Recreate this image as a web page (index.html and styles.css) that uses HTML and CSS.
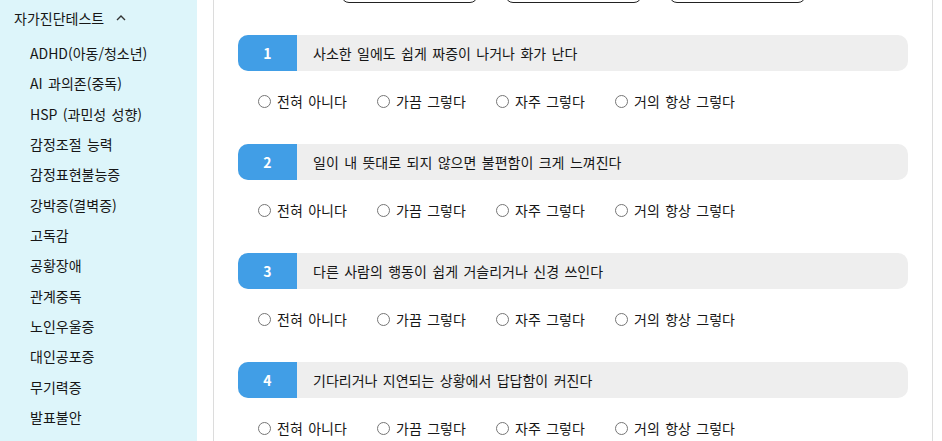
FILE: index.html
```html
<!DOCTYPE html>
<html lang="ko">
<head>
<meta charset="utf-8">
<title>자가진단테스트</title>
<link rel="stylesheet" href="styles.css">
</head>
<body>
<div class="page">
  <aside class="sidebar">
    <div class="side-head">자가진단테스트
      <svg class="caret" width="10" height="6" viewBox="0 0 10 6"><path d="M1 5 L5 1 L9 5" fill="none" stroke="#333" stroke-width="1.4"/></svg>
    </div>
    <ul class="side-list">
      <li>ADHD(아동/청소년)</li>
      <li>AI 과의존(중독)</li>
      <li>HSP (과민성 성향)</li>
      <li>감정조절 능력</li>
      <li>감정표현불능증</li>
      <li>강박증(결벽증)</li>
      <li>고독감</li>
      <li>공황장애</li>
      <li>관계중독</li>
      <li>노인우울증</li>
      <li>대인공포증</li>
      <li>무기력증</li>
      <li>발표불안</li>
    </ul>
  </aside>
  <main class="main">
    <div class="tabs">
      <span class="tab"></span>
      <span class="tab"></span>
      <span class="tab"></span>
    </div>

    <section class="q">
      <div class="q-head"><span class="q-num">1</span><span class="q-text">사소한 일에도 쉽게 짜증이 나거나 화가 난다</span></div>
      <div class="opts">
        <label class="opt"><span class="radio"></span>전혀 아니다</label>
        <label class="opt"><span class="radio"></span>가끔 그렇다</label>
        <label class="opt"><span class="radio"></span>자주 그렇다</label>
        <label class="opt"><span class="radio"></span>거의 항상 그렇다</label>
      </div>
    </section>

    <section class="q">
      <div class="q-head"><span class="q-num">2</span><span class="q-text">일이 내 뜻대로 되지 않으면 불편함이 크게 느껴진다</span></div>
      <div class="opts">
        <label class="opt"><span class="radio"></span>전혀 아니다</label>
        <label class="opt"><span class="radio"></span>가끔 그렇다</label>
        <label class="opt"><span class="radio"></span>자주 그렇다</label>
        <label class="opt"><span class="radio"></span>거의 항상 그렇다</label>
      </div>
    </section>

    <section class="q">
      <div class="q-head"><span class="q-num">3</span><span class="q-text">다른 사람의 행동이 쉽게 거슬리거나 신경 쓰인다</span></div>
      <div class="opts">
        <label class="opt"><span class="radio"></span>전혀 아니다</label>
        <label class="opt"><span class="radio"></span>가끔 그렇다</label>
        <label class="opt"><span class="radio"></span>자주 그렇다</label>
        <label class="opt"><span class="radio"></span>거의 항상 그렇다</label>
      </div>
    </section>

    <section class="q">
      <div class="q-head"><span class="q-num">4</span><span class="q-text">기다리거나 지연되는 상황에서 답답함이 커진다</span></div>
      <div class="opts">
        <label class="opt"><span class="radio"></span>전혀 아니다</label>
        <label class="opt"><span class="radio"></span>가끔 그렇다</label>
        <label class="opt"><span class="radio"></span>자주 그렇다</label>
        <label class="opt"><span class="radio"></span>거의 항상 그렇다</label>
      </div>
    </section>
  </main>
</div>
</body>
</html>
```

FILE: styles.css
```css
* { box-sizing: border-box; }
html, body {
  margin: 0;
  padding: 0;
  background: #fff;
  overflow: hidden;
}
body {
  font-family: "Noto Sans CJK KR", "Noto Sans", sans-serif;
  color: #161616;
  font-size: 14px;
  word-spacing: 1.5px;
}
.page {
  display: flex;
  height: 441px;
  overflow: hidden;
}
.sidebar {
  width: 197px;
  flex: none;
  background: #ddf5fa;
}
.side-head {
  height: 36px;
  line-height: 36px;
  padding-left: 14px;
  display: flex;
  align-items: center;
}
.caret {
  margin-left: 12px;
  margin-top: -1px;
}
.side-list {
  list-style: none;
  margin: 0;
  padding: 2px 0 0 30px;
}
.side-list li {
  line-height: 30.33px;
  height: 30.33px;
}
.main {
  margin-left: 16px;
  width: 720px;
  flex: none;
  border-left: 1px solid #dcdcdc;
  border-right: 1px solid #dcdcdc;
  padding: 0 24px;
}
.tabs {
  display: flex;
  justify-content: center;
  gap: 27px;
  height: 35px;
}
.tab {
  width: 137px;
  height: 40px;
  margin-top: -37px;
  border: 1px solid #222;
  border-radius: 8px;
}
.q {
  margin-bottom: 33px;
}
.q-head {
  display: flex;
  height: 36px;
  background: #eeeeee;
  border-radius: 10px;
  overflow: hidden;
  align-items: stretch;
}
.q-num {
  width: 59px;
  flex: none;
  background: #419ee6;
  color: #fff;
  font-weight: 700;
  display: flex;
  align-items: center;
  justify-content: center;
}
.q-text {
  padding-left: 16px;
  display: flex;
  align-items: center;
}
.opts {
  display: flex;
  padding: 20px 0 0 20px;
  height: 40px;
}
.opt {
  display: flex;
  align-items: center;
  height: 20px;
  width: 119px;
  flex: none;
  white-space: nowrap;
}
.opt:last-child {
  width: auto;
}
.radio {
  width: 13px;
  height: 13px;
  border: 1px solid #767676;
  border-radius: 50%;
  background: #fff;
  margin-right: 6px;
  flex: none;
}
```
